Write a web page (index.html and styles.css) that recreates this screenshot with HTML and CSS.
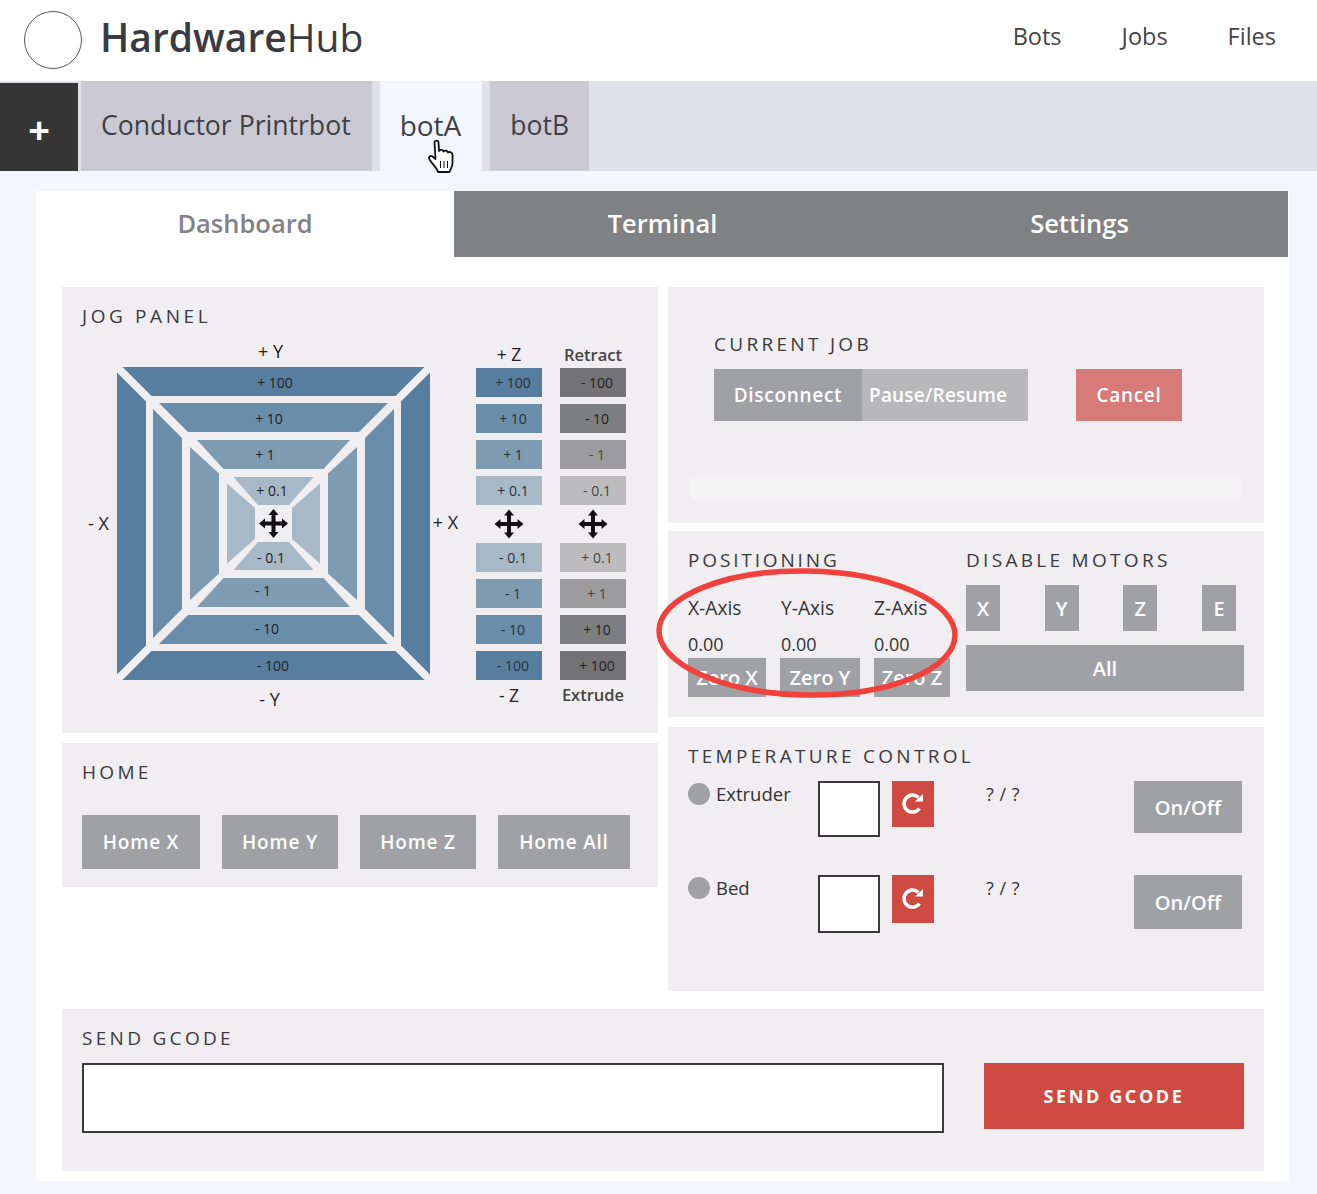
FILE: index.html
```html
<!DOCTYPE html>
<html lang="en">
<head>
<meta charset="utf-8">
<title>HardwareHub</title>
<link rel="stylesheet" href="styles.css">
</head>
<body>
<header class="topbar">
  <div class="brand">
    <span class="logo"></span>
    <span class="brand-name"><b>Hardware</b>Hub</span>
  </div>
  <nav class="topnav">
    <a>Bots</a>
    <a>Jobs</a>
    <a>Files</a>
  </nav>
</header>

<div class="botbar">
  <div class="bot-add">+</div>
  <div class="bot-tab first">Conductor Printrbot</div>
  <div class="bot-tab active">botA</div>
  <div class="bot-tab last">botB</div>
</div>

<main class="card">
  <div class="viewtabs">
    <div class="viewtab current">Dashboard</div>
    <div class="viewtab">Terminal</div>
    <div class="viewtab">Settings</div>
  </div>

  <div class="columns">
    <div class="col">
      <section class="panel jog">
        <h2 class="title jog-title">JOG PANEL</h2>
        <div class="jog-body">
          <svg class="pad" width="384" height="378" viewBox="-191.5 -186.5 384 378">
            <defs>
              <g id="ring">
                <polygon class="r1" points="-151,-156.5 151,-156.5 122,-127.5 -122,-127.5"/>
                <polygon class="r2" points="-114.5,-120.5 114.5,-120.5 85.5,-91.5 -85.5,-91.5"/>
                <polygon class="r3" points="-76.5,-83.5 76.5,-83.5 50,-54.5 -50,-54.5"/>
                <polygon class="r4" points="-40,-46.5 40,-46.5 15.5,-18.5 -15.5,-18.5"/>
              </g>
              <path id="move" d="M0 -14.5 L5 -8.5 L2 -8.5 L2 -2 L8.5 -2 L8.5 -5 L14.5 0 L8.5 5 L8.5 2 L2 2 L2 8.5 L5 8.5 L0 14.5 L-5 8.5 L-2 8.5 L-2 2 L-8.5 2 L-8.5 5 L-14.5 0 L-8.5 -5 L-8.5 -2 L-2 -2 L-2 -8.5 L-5 -8.5 Z"/>
            </defs>
            <use href="#ring"/>
            <use href="#ring" transform="rotate(90)"/>
            <use href="#ring" transform="rotate(180)"/>
            <use href="#ring" transform="rotate(270)"/>
            <use href="#move" class="move-icon"/>
            <text class="axis" x="-3" y="-166">+ Y</text>
            <text class="axis" x="-4" y="182">- Y</text>
            <text class="axis" x="-175" y="6">- X</text>
            <text class="axis" x="172" y="5">+ X</text>
            <text class="step" x="1.5" y="-136">+ 100</text>
            <text class="step" x="-4.5" y="-100">+ 10</text>
            <text class="step" x="-8.5" y="-64">+ 1</text>
            <text class="step" x="-1.5" y="-28">+ 0.1</text>
            <text class="step" x="-2.5" y="39">- 0.1</text>
            <text class="step" x="-10.5" y="72">- 1</text>
            <text class="step" x="-6.5" y="110">- 10</text>
            <text class="step" x="-0.5" y="147">- 100</text>
          </svg>

          <div class="zcols">
            <div class="zcol">
              <div class="zlabel top">+ Z</div>
              <div class="zbtn b1">+ 100</div>
              <div class="zbtn b2">+ 10</div>
              <div class="zbtn b3">+ 1</div>
              <div class="zbtn b4">+ 0.1</div>
              <svg class="zmove" width="30" height="30" viewBox="-15 -15 30 30"><use href="#move"/></svg>
              <div class="zbtn b4">- 0.1</div>
              <div class="zbtn b3">- 1</div>
              <div class="zbtn b2">- 10</div>
              <div class="zbtn b1">- 100</div>
              <div class="zlabel">- Z</div>
            </div>
            <div class="zcol">
              <div class="zlabel top strong">Retract</div>
              <div class="zbtn g1">- 100</div>
              <div class="zbtn g2">- 10</div>
              <div class="zbtn g3">- 1</div>
              <div class="zbtn g4">- 0.1</div>
              <svg class="zmove" width="30" height="30" viewBox="-15 -15 30 30"><use href="#move"/></svg>
              <div class="zbtn g4">+ 0.1</div>
              <div class="zbtn g3">+ 1</div>
              <div class="zbtn g2">+ 10</div>
              <div class="zbtn g1">+ 100</div>
              <div class="zlabel strong">Extrude</div>
            </div>
          </div>
        </div>
      </section>

      <section class="panel home">
        <h2 class="title">HOME</h2>
        <div class="home-row">
          <div class="btn home-x">Home X</div>
          <div class="btn home-y">Home Y</div>
          <div class="btn home-y">Home Z</div>
          <div class="btn home-all">Home All</div>
        </div>
      </section>
    </div>

    <div class="col">
      <section class="panel job">
        <div class="job-inner">
          <h2 class="title">CURRENT JOB</h2>
          <div class="job-row">
            <div class="btn disconnect">Disconnect</div>
            <div class="btn pause">Pause/Resume</div>
            <div class="btn cancel">Cancel</div>
          </div>
        </div>
        <div class="progress"></div>
      </section>

      <section class="panel positioning">
        <div class="pos-left">
          <h2 class="title pos-title">POSITIONING</h2>
          <div class="axes">
            <div class="axis-col ax"><div class="axis-name">X-Axis</div><div class="axis-val">0.00</div><div class="btn zero">Zero X</div></div>
            <div class="axis-col ay"><div class="axis-name">Y-Axis</div><div class="axis-val">0.00</div><div class="btn zero">Zero Y</div></div>
            <div class="axis-col az"><div class="axis-name">Z-Axis</div><div class="axis-val">0.00</div><div class="btn zero">Zero Z</div></div>
          </div>
        </div>
        <div class="pos-right">
          <h2 class="title">DISABLE MOTORS</h2>
          <div class="motors">
            <div class="btn motor">X</div>
            <div class="btn motor">Y</div>
            <div class="btn motor">Z</div>
            <div class="btn motor">E</div>
          </div>
          <div class="btn motor-all">All</div>
        </div>
      </section>

      <section class="panel temp">
        <h2 class="title">TEMPERATURE CONTROL</h2>
        <div class="temp-row">
          <div class="temp-name"><span class="dot"></span>Extruder</div>
          <div class="temp-input"></div>
          <div class="refresh"><svg width="26" height="26" viewBox="0 0 26 26"><path class="refresh-arc" d="M19.5 17.5 A8.5 8.5 0 1 1 18.5 6.5"/><path class="refresh-head" d="M15 10.5 L23 3 L23 10.5 Z"/></svg></div>
          <div class="temp-val">? / ?</div>
          <div class="btn onoff">On/Off</div>
        </div>
        <div class="temp-row second">
          <div class="temp-name"><span class="dot"></span>Bed</div>
          <div class="temp-input"></div>
          <div class="refresh"><svg width="26" height="26" viewBox="0 0 26 26"><path class="refresh-arc" d="M19.5 17.5 A8.5 8.5 0 1 1 18.5 6.5"/><path class="refresh-head" d="M15 10.5 L23 3 L23 10.5 Z"/></svg></div>
          <div class="temp-val">? / ?</div>
          <div class="btn onoff">On/Off</div>
        </div>
      </section>
    </div>
  </div>

  <section class="panel gcode">
    <h2 class="title">SEND GCODE</h2>
    <div class="gcode-row">
      <div class="gcode-input"></div>
      <div class="btn gcode-send">SEND GCODE</div>
    </div>
  </section>
</main>

<svg class="hand" width="29" height="35" viewBox="0 0 29 35">
  <path class="hand-fill" d="M7.5 3.5 C7.5 1 11.5 1 11.5 3.5 L12 12 C13 10.5 16 10.5 16.5 12.5 C18 11 20.5 11.5 21 13.5 C22.5 12.5 25.5 13 25.5 16 L25.5 24 C25.5 28 23.5 30 22.5 33 L11 33 C10 29 6 26 2.5 20.5 C1 18 3.5 16 5.5 17.5 L8.5 20 Z"/>
  <path class="hand-line" d="M13.5 22 V29 M17 22 V29 M20.5 22 V29"/>
</svg>

<svg class="circle-mark" width="310" height="136" viewBox="0 0 310 136">
  <ellipse cx="155" cy="68" rx="148" ry="62" transform="rotate(1 155 68)"/>
</svg>
</body>
</html>
```
FILE: styles.css
```css
* { box-sizing: border-box; }

html, body {
  margin: 0;
  padding: 0;
}

body {
  position: relative;
  width: 1317px;
  height: 1194px;
  overflow: hidden;
  background: #f3f6fb;
  font-family: "Open Sans", "Noto Sans", sans-serif;
  color: #333;
}

/* Header */
.topbar {
  display: flex;
  justify-content: space-between;
  align-items: center;
  height: 81px;
  padding: 0 41px 7px 24px;
  background: #fff;
}

.brand {
  display: flex;
  align-items: center;
  gap: 18px;
}

.logo {
  width: 58px;
  height: 58px;
  margin-top: 5px;
  border: 1px solid #555;
  border-radius: 50%;
}

.brand-name {
  font-size: 39px;
  line-height: 46px;
  color: #3a3a42;
}

.brand-name b { font-weight: 600; }

.topnav {
  display: flex;
  gap: 60px;
  margin-top: -2px;
  font-size: 23.5px;
  color: #444;
}

/* Bot tabs */
.botbar {
  display: flex;
  height: 90px;
  background: #e0e0e8;
}

.bot-add {
  display: flex;
  align-items: center;
  justify-content: center;
  width: 78px;
  margin: 2px 3px 0 0;
  padding-top: 4px;
  background: #363636;
  color: #fff;
  font-size: 38px;
  font-weight: 700;
}

.bot-tab {
  padding: 24px 20px 0;
  margin-right: 8px;
  background: #cbc9d3;
  font-size: 28px;
  line-height: 40px;
  color: #3f3f48;
}

.bot-tab.first {
  padding-right: 21px;
  font-size: 26.6px;
}

.bot-tab.active {
  padding-right: 21px;
  background: #f3f6fb;
}

.bot-tab.last { font-size: 26.5px; }

/* Main card */
.card {
  width: 1253px;
  height: 990px;
  margin: 20px 0 0 36px;
  padding-bottom: 10px;
  background: #fff;
}

.viewtabs {
  display: grid;
  grid-template-columns: 418px 417px 417px;
  height: 66px;
  width: 1252px;
  margin-bottom: 30px;
  background: #808183;
}

.viewtab {
  display: flex;
  align-items: center;
  justify-content: center;
  padding-bottom: 2px;
  font-size: 25.5px;
  font-weight: 600;
  color: #fff;
}

.viewtab.current {
  background: #fff;
  color: #828286;
}

.columns {
  display: grid;
  grid-template-columns: 596px 596px;
  gap: 10px;
  margin: 0 0 18px 26px;
  align-items: start;
}

.col {
  display: flex;
  flex-direction: column;
  gap: 10px;
}

.panel { background: #f0eef0; }

.title {
  margin: 0;
  font-size: 19px;
  font-weight: 400;
  line-height: 22px;
  letter-spacing: 3.3px;
  color: #3a3a3e;
}

.jog-title { letter-spacing: 3.6px; }
.pos-title { letter-spacing: 2.85px; }

.btn {
  display: flex;
  align-items: center;
  justify-content: center;
  background: #a0a1a5;
  color: #fff;
  font-size: 20px;
  font-weight: 600;
  white-space: nowrap;
}

/* Jog panel */
.jog {
  height: 446px;
  padding: 18px 20px 0;
}

.jog-body {
  display: flex;
  gap: 10px;
  margin-top: 10px;
}

.r1 { fill: #587e9f; }
.r2 { fill: #6a8daa; }
.r3 { fill: #7f9bb2; }
.r4 { fill: #a7b9c7; }
.move-icon { fill: #111; }

.axis, .step {
  text-anchor: middle;
  fill: #222;
}

.axis { font-size: 18px; }
.step { font-size: 14px; }

.zcols {
  display: flex;
  gap: 18px;
  margin-top: 4px;
}

.zcol {
  display: flex;
  flex-direction: column;
  width: 66px;
}

.zlabel {
  height: 16px;
  font-size: 17.5px;
  line-height: 16px;
  text-align: center;
  color: #222;
  white-space: nowrap;
}

.zlabel.top {
  height: 27px;
  line-height: 27px;
}

.zlabel.strong {
  font-size: 16.5px;
  font-weight: 600;
  color: #444;
}

.zbtn {
  height: 29px;
  margin-bottom: 7px;
  padding-left: 8px;
  font-size: 14px;
  line-height: 29px;
  text-align: center;
  color: #26323c;
}

.zmove {
  display: block;
  margin: -3px auto 4px;
  fill: #111;
}

.b1 { background: #587e9f; }
.b2 { background: #6a8daa; }
.b3 { background: #7f9bb2; }
.b4 { background: #a7b9c7; }
.g1 { background: #737375; color: #222; }
.g2 { background: #7d7e80; color: #222; }
.g3 { background: #9b9b9d; color: #444; }
.g4 { background: #bcbcbe; color: #444; }

/* Home */
.home {
  height: 144px;
  padding: 18px 20px 0;
}

.home-row {
  display: flex;
  gap: 22px;
  margin-top: 32px;
}

.home-row .btn {
  height: 54px;
  font-size: 19px;
  letter-spacing: 0.8px;
}

.home-x { width: 118px; }
.home-y { width: 116px; }
.home-all { width: 132px; }

/* Current job */
.job {
  height: 236px;
  margin-bottom: -2px;
  padding: 46px 22px 0;
}

.job-inner { padding-left: 24px; }

.job-row {
  display: flex;
  margin-top: 14px;
}

.job-row .btn {
  height: 52px;
  font-size: 19px;
  letter-spacing: 0.7px;
}

.disconnect { width: 148px; }

.job-row .btn.pause {
  justify-content: flex-start;
  width: 166px;
  padding-left: 7px;
  letter-spacing: 0.2px;
  background: #b8b8ba;
}

.btn.cancel { width: 106px; margin-left: 48px; background: #d77b79; }

.progress {
  height: 23px;
  margin-top: 56px;
  background: #f4f4f5;
  border-radius: 2px;
}

/* Positioning */
.positioning {
  display: flex;
  height: 186px;
  padding: 18px 20px 0;
}

.pos-left { width: 278px; }

.axes {
  display: flex;
  gap: 14px;
  margin-top: 25px;
}

.axis-col { display: flex; flex-direction: column; }
.ax { width: 78px; }
.ay { width: 80px; }
.az { width: 76px; }
.ay .axis-name, .ay .axis-val { padding-left: 1px; }

.axis-name, .axis-val {
  font-size: 19.2px;
  line-height: 24px;
  white-space: nowrap;
}

.axis-val { margin-top: 12px; font-size: 18px; }

.btn.zero {
  height: 39px;
  margin-top: 2px;
}

.motors {
  display: flex;
  justify-content: space-between;
  margin-top: 14px;
  width: 270px;
}

.motor { width: 34px; height: 46px; }

.motor-all {
  width: 278px;
  height: 46px;
  margin-top: 14px;
}

/* Temperature */
.temp {
  height: 264px;
  margin-top: 0;
  padding: 18px 22px 0 20px;
}

.temp-row {
  display: flex;
  align-items: flex-start;
  margin-top: 14px;
}

.temp-row.second { margin-top: 38px; }

.temp-name {
  display: flex;
  align-items: center;
  gap: 6px;
  width: 130px;
  height: 26px;
  padding-bottom: 2px;
  font-size: 18.5px;
}

.dot {
  width: 22px;
  height: 22px;
  margin-bottom: -2px;
  border-radius: 50%;
  background: #a0a1a5;
}

.temp-input {
  width: 62px;
  height: 56px;
  background: #fff;
  border: 2px solid #3a3a3a;
}

.second .temp-input { height: 58px; }

.refresh {
  display: flex;
  align-items: center;
  justify-content: center;
  width: 42px;
  height: 46px;
  margin-left: 12px;
  background: #cf4a40;
}

.second .refresh { height: 48px; }

.refresh-arc {
  fill: none;
  stroke: #fff;
  stroke-width: 3.5;
}

.refresh-head { fill: #fff; }

.temp-val {
  width: 148px;
  margin-left: 52px;
  font-size: 18px;
  line-height: 26px;
  letter-spacing: 0.5px;
}

.onoff { width: 108px; height: 52px; }
.second .onoff { height: 54px; }

/* Send gcode */
.gcode {
  width: 1202px;
  height: 162px;
  margin-left: 26px;
  padding: 18px 20px 0;
}

.gcode-row {
  display: flex;
  justify-content: space-between;
  align-items: flex-start;
  margin-top: 14px;
}

.gcode-input {
  width: 862px;
  height: 70px;
  background: #fff;
  border: 2px solid #3a3a3a;
}

.btn.gcode-send {
  width: 260px;
  height: 66px;
  background: #cf4a40;
  font-size: 18px;
  font-weight: 700;
  letter-spacing: 2.6px;
}

/* Overlays */
.hand {
  position: absolute;
  left: 427px;
  top: 139px;
}

.hand-fill {
  fill: #fff;
  stroke: #111;
  stroke-width: 1.8;
  stroke-linejoin: round;
}

.hand-line {
  fill: none;
  stroke: #111;
  stroke-width: 1;
}

.circle-mark {
  position: absolute;
  left: 652px;
  top: 565px;
}

.circle-mark ellipse {
  fill: none;
  stroke: #f2403c;
  stroke-width: 5.5;
}
```
